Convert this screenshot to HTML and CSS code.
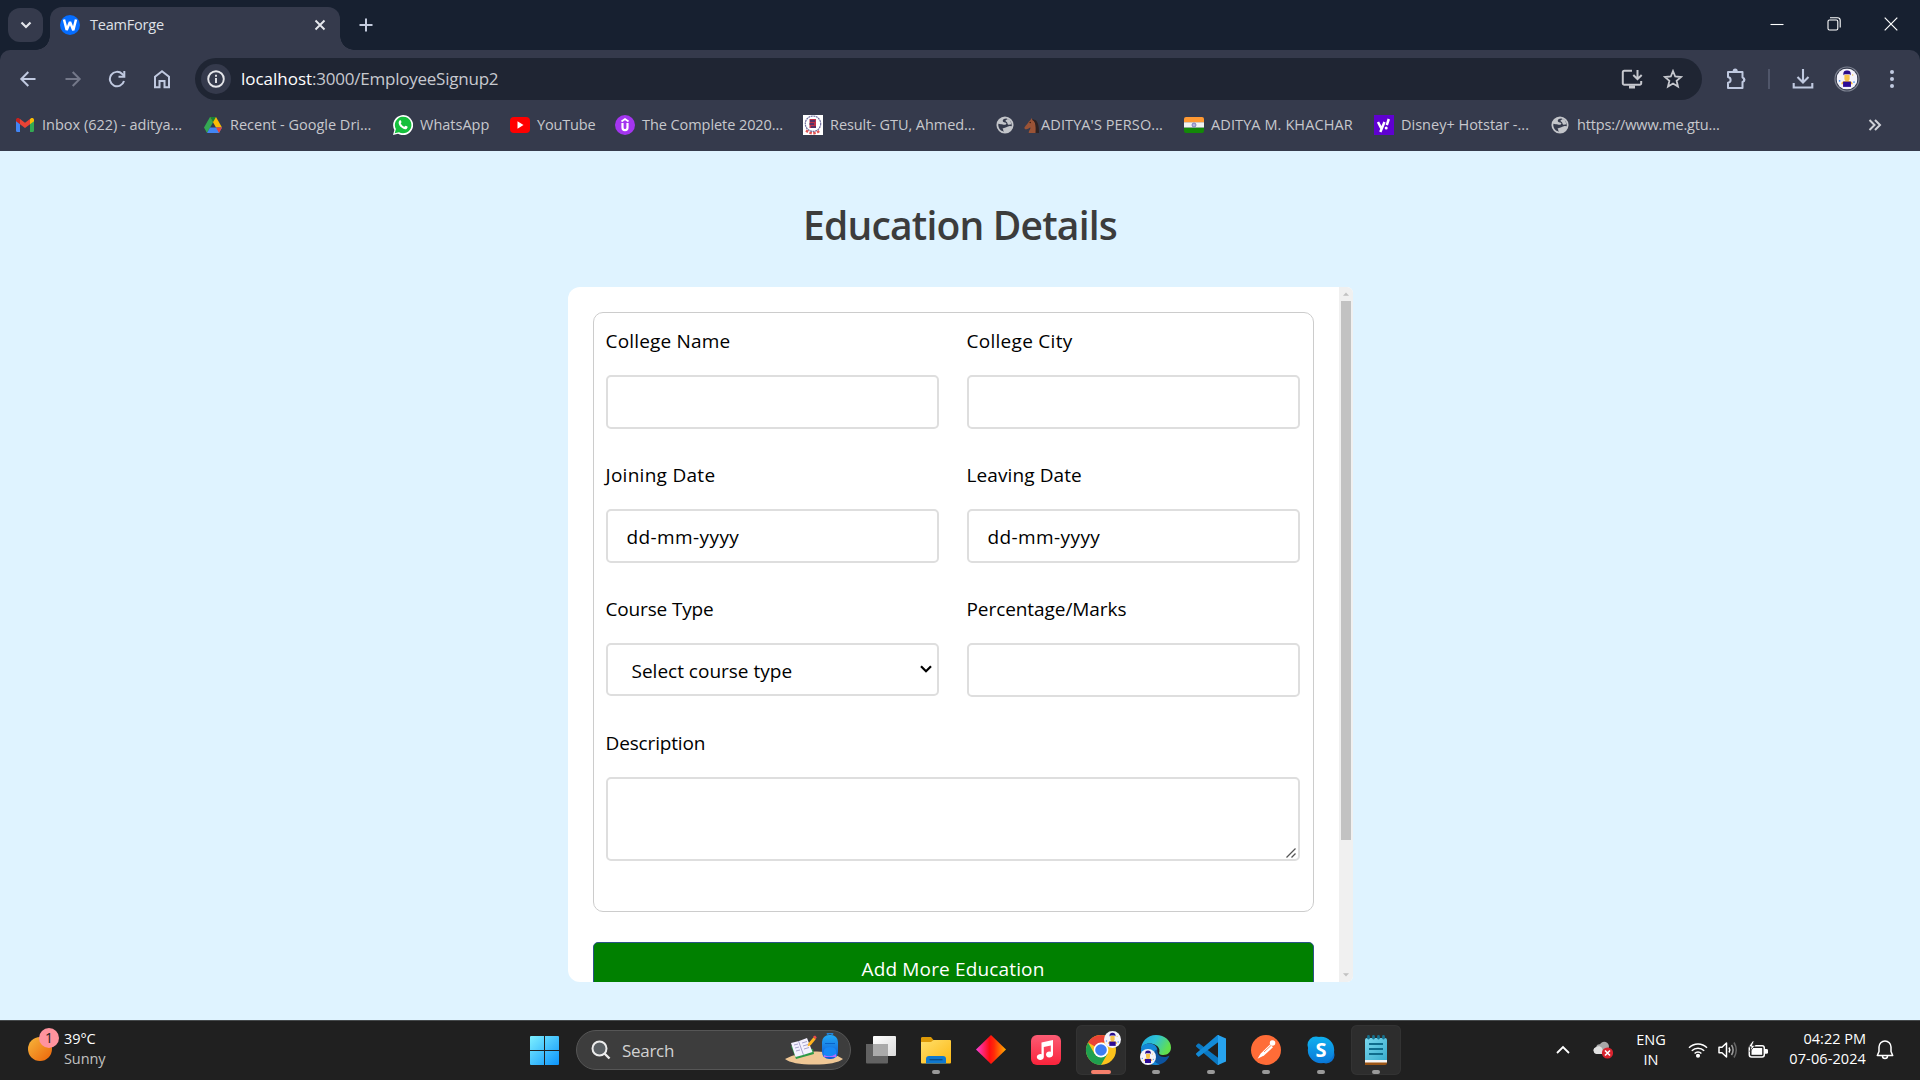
FILE: index.html
```html
<!DOCTYPE html>
<html lang="en">
<head>
<meta charset="utf-8">
<title>TeamForge</title>
<link rel="stylesheet" href="styles.css">
</head>
<body>
<svg class="defs" width="0" height="0" aria-hidden="true">
  <defs>
    <linearGradient id="sun" x1="0" y1="0" x2="1" y2="1"><stop offset="0" stop-color="#f6b73c"/><stop offset="1" stop-color="#ec6309"/></linearGradient>
    <linearGradient id="win" x1="0" y1="0" x2="1" y2="1"><stop offset="0" stop-color="#7df0ff"/><stop offset="1" stop-color="#0c94fb"/></linearGradient>
    <linearGradient id="folder" x1="0" y1="0" x2="1" y2="1"><stop offset="0" stop-color="#ffdf6b"/><stop offset="1" stop-color="#fdb813"/></linearGradient>
    <linearGradient id="diamond" x1="0" y1="0" x2="1" y2="0"><stop offset="0" stop-color="#fb3fd8"/><stop offset=".45" stop-color="#ff0d12"/><stop offset=".6" stop-color="#ff2a08"/><stop offset="1" stop-color="#ffb000"/></linearGradient>
    <linearGradient id="music" x1="0" y1="0" x2="0" y2="1"><stop offset="0" stop-color="#fb5c74"/><stop offset="1" stop-color="#fa233b"/></linearGradient>
    <linearGradient id="edgeTop" x1="0" y1="0" x2="1" y2=".4"><stop offset="0" stop-color="#1ba6e0"/><stop offset=".5" stop-color="#2fc3d5"/><stop offset="1" stop-color="#62e04c"/></linearGradient>
    <linearGradient id="skype" x1="0" y1="0" x2="0" y2="1"><stop offset="0" stop-color="#0fb0ef"/><stop offset="1" stop-color="#0a78d8"/></linearGradient>
    <linearGradient id="note" x1="0" y1="0" x2="1" y2="1"><stop offset="0" stop-color="#7ad8ee"/><stop offset="1" stop-color="#38acce"/></linearGradient>
    <linearGradient id="bag" x1="0" y1="0" x2="0" y2="1"><stop offset="0" stop-color="#22a8f5"/><stop offset="1" stop-color="#0f56d6"/></linearGradient>
    <linearGradient id="pane" x1="0" y1="0" x2="1" y2="1"><stop offset="0" stop-color="#ffffff"/><stop offset="1" stop-color="#dadada"/></linearGradient>
    <symbol id="person" viewBox="0 0 24 24">
      <circle cx="12" cy="12" r="12" fill="#f3f3fb"/>
      <path d="M9 7h6v4.500a3 3 0 0 1-6 0z" fill="#f6c24a"/>
      <path d="M8 7.800C7.300 4 9 2.400 12 2.400s4.900 1.500 4.100 5.400L15 6.500H9.300z" fill="#2a0c8c"/>
      <path d="M5.500 18c0-3 3-4 6.500-4s6.500 1 6.500 4z" fill="#f4b740"/>
      <rect x="7.500" y="15" width="9" height="6" fill="#2d0b96"/>
      <circle cx="3.500" cy="14" r="1" fill="#4d93f2"/><circle cx="20" cy="15.500" r="1" fill="#4d93f2"/><circle cx="18.500" cy="7.500" r=".8" fill="#f6c24a"/>
    </symbol>
    <symbol id="globe" viewBox="0 0 20 20">
      <circle cx="10" cy="10" r="9.500" fill="#c3c5ca"/>
      <path d="M11.500 2.700C8.500 3 7.500 4 7.500 5.500S10 7 11 7.500s.5 2-1 2.200c-2 .2-3-.7-4.600-.6L2.600 8.600C2.200 11 3 14 5.500 16l3.500 1.500c-1.500-1.500-.5-2.500-1.800-3.700l4.300-1.300c1.700-.5 2.500-1.500 4-1.300l2 .3c.5-4-2-8-6-8.800z" fill="#353a4c"/>
      <path d="M10.500 5.500c0-1.300 2-1 2.600-2.400l2.500 1.700 1.600 4.400-3 .6c-1.700-.5-1.200-2-2-2.900z" fill="#c3c5ca"/>
    </symbol>
  </defs>
</svg>

<div class="screen">
  <header class="tabstrip">
    <button class="tab-search" aria-label="Search tabs"><svg width="12" height="8" viewBox="0 0 12 8"><path d="M1.500 1.500 6 6l4.500-4.500" fill="none" stroke="#e3e5ea" stroke-width="2.200"/></svg></button>
    <div class="tab">
      <svg width="20" height="20" viewBox="0 0 20 20"><circle cx="10" cy="10" r="10" fill="#056dff"/><path d="M4 4.500 6.700 15 10 7l3.300 8.200L16 4.500" fill="none" stroke="#fff" stroke-width="2.500" stroke-linejoin="bevel"/></svg>
      <span class="tab-title">TeamForge</span>
      <svg width="12" height="12" viewBox="0 0 12 12"><path d="m1.500 1.500 9 9m0-9-9 9" stroke="#e6e8ee" stroke-width="1.900"/></svg>
    </div>
    <svg class="new-tab" width="14" height="14" viewBox="0 0 14 14"><path d="M7 .5v13M.5 7h13" stroke="#c4cbdd" stroke-width="2"/></svg>
    <div class="window-buttons">
      <svg width="14" height="14" viewBox="0 0 14 14"><path d="M.5 7.500h13" stroke="#fff" stroke-width="1.100"/></svg>
      <svg width="14" height="14" viewBox="0 0 14 14" fill="none" stroke="#fff" stroke-width="1.100"><rect x="1" y="3" width="9.800" height="10" rx="1.500"/><path d="M3 .8h7.500a2.700 2.700 0 0 1 2.700 2.700v7"/></svg>
      <svg width="14" height="14" viewBox="0 0 14 14"><path d="m.7.700 12.600 12.600m0-12.600L.7 13.300" stroke="#fff" stroke-width="1.200"/></svg>
    </div>
  </header>

  <div class="toolbar">
    <nav class="nav-buttons">
      <svg width="18" height="18" viewBox="0 0 18 18" fill="none" stroke="#c0c9e0" stroke-width="2"><path d="M16.500 9H3M9.300 2 2.300 9l7 7"/></svg>
      <svg width="18" height="18" viewBox="0 0 18 18" fill="none" stroke="#747889" stroke-width="2"><path d="M1.500 9H15M8.700 2l7 7-7 7"/></svg>
      <svg width="18" height="18" viewBox="0 0 18 18" fill="none" stroke="#c0c9e0" stroke-width="2"><path d="M16 11a7.200 7.200 0 1 1-1.800-7L16 5.800"/><path d="M16.300 1v5.800h-5.800"/></svg>
      <svg width="18" height="20" viewBox="0 0 18 20" fill="none" stroke="#c0c9e0" stroke-width="2"><path d="M2 7.800 9 2.300l7 5.500v10.500h-4.500V12h-5v6.300H2z"/></svg>
    </nav>
    <div class="omnibox">
      <span class="site-info"><svg width="18" height="18" viewBox="0 0 18 18"><circle cx="9" cy="9" r="7.800" fill="none" stroke="#e5e6ea" stroke-width="1.900"/><path d="M9 8v5M9 4.800v1.900" stroke="#e5e6ea" stroke-width="1.900"/></svg></span>
      <span class="url"><b>localhost</b>:3000/EmployeeSignup2</span>
      <svg class="install" width="22" height="20" viewBox="0 0 22 20" fill="none" stroke="#c6c8ce" stroke-width="2"><path d="M11 1.800H3.300A1.500 1.500 0 0 0 1.800 3.300v10.900a1.500 1.500 0 0 0 1.500 1.500h15.400a1.500 1.500 0 0 0 1.500-1.500V12M16.500 1v9M12.300 6l4.200 4.200L20.700 6"/><path d="M8 18h6" stroke-width="3"/></svg>
      <svg width="20" height="20" viewBox="0 0 20 20"><path d="m10 2 2.200 5.500 5.900.5-4.500 3.800 1.400 5.800-5-3.100-5 3.100 1.400-5.800L1.900 8l5.900-.5z" fill="none" stroke="#c6c8ce" stroke-width="1.800"/></svg>
    </div>
    <div class="toolbar-actions">
      <svg width="22" height="22" viewBox="0 0 22 22"><path d="M3 4h14.500v5.500a2.300 2.300 0 0 1 0 4.400V20H3v-5.200c3.500-.6 3.500-5 0-5.700z" fill="none" stroke="#c0c9e0" stroke-width="2" stroke-linejoin="round"/><path d="M7.700 3a2.500 2.500 0 0 1 5 0zM18 9.200a2.500 2.500 0 0 1 0 5z" fill="#c0c9e0"/></svg>
      <span class="divider"></span>
      <svg width="22" height="22" viewBox="0 0 22 22" fill="none" stroke="#c0c9e0" stroke-width="2.100"><path d="M11 1v13M5.500 9 11 14.500 16.500 9M1.700 15v4.500h18.600V15"/></svg>
      <svg class="a-user" width="26" height="26" viewBox="0 0 26 26"><circle cx="13" cy="13" r="12" fill="none" stroke="#7d8291" stroke-width="1.200"/><use href="#person" x="2.500" y="2.500" width="21" height="21"/></svg>
      <svg width="4" height="20" viewBox="0 0 4 20" fill="#c0c9e0"><circle cx="2" cy="3" r="2"/><circle cx="2" cy="10" r="2"/><circle cx="2" cy="17" r="2"/></svg>
    </div>
  </div>

  <div class="bookmarks">
    <a class="bm"><svg width="18" height="14" viewBox="0 0 18 14"><path d="M0 2v10.500c0 .8.500 1.500 1.300 1.500H4V5z" fill="#4285f4"/><path d="M18 2v10.500c0 .8-.5 1.500-1.300 1.500H14V5z" fill="#34a853"/><path d="M14 1v5.300l4-3V1.800C18 .2 16-.5 14.800.4z" fill="#fbbc04"/><path d="M0 3.300V1.800C0 .2 2-.5 3.200.4L4 1v5.300z" fill="#c5221f"/><path d="M4 6.300V1l5 3.700L14 1v5.300l-5 3.800z" fill="#ea4335"/></svg><span>Inbox (622) - aditya...</span></a>
    <a class="bm"><svg width="18" height="16" viewBox="0 0 18 16"><path d="M6 0 0 10.500 3 16l6-10.500z" fill="#34a853"/><path d="M6 0h6l6 10.500h-6z" fill="#fbbc04"/><path d="M6 0h6L9 5.300z" fill="#188038"/><path d="M6 10.500h12L15 16H3z" fill="#4285f4"/><path d="M12 10.500h6L15 16z" fill="#ea4335"/></svg><span>Recent - Google Dri...</span></a>
    <a class="bm g7"><svg width="20" height="20" viewBox="0 0 20 20"><path d="M0 20 1.400 15A10 10 0 1 1 5 18.700z" fill="#fff"/><path d="m1.700 18.300 1.200-4.200A8.300 8.300 0 1 1 6 17.200z" fill="#15c03c"/><path d="M6.700 5.300c.5-.3 1-.2 1.200.3l.6 1.500c.1.400-.6 1-.7 1.300.8 1.500 1.900 2.600 3.500 3.300.5-.2.900-1.200 1.400-1l1.700.9c.5.3-.1 2-.8 2.300-1.800.9-4-.2-5.700-1.800C6.300 10.600 4.500 7.700 6.700 5.300z" fill="#fff"/></svg><span>WhatsApp</span></a>
    <a class="bm g7"><svg width="20" height="16" viewBox="0 0 20 16"><rect width="20" height="16" rx="4" fill="#f00"/><path d="m7.500 4.300 6 3.700-6 3.700z" fill="#fff"/></svg><span class="n2">YouTube</span></a>
    <a class="bm g7"><svg width="20" height="20" viewBox="0 0 20 20"><circle cx="10" cy="10" r="10" fill="#a435f0"/><path d="M6.500 6.500 10 4l3.500 2.500" fill="none" stroke="#fff" stroke-width="1.800"/><path d="M7.500 8v4.500a2.500 2.700 0 0 0 5 0V8" fill="none" stroke="#fff" stroke-width="2.200"/></svg><span class="n1">The Complete 2020...</span></a>
    <a class="bm g7"><svg width="20" height="20" viewBox="0 0 20 20"><path d="M0 0h20v20H0z" fill="#fff"/><circle cx="10" cy="8.700" r="7.700" fill="#fff" stroke="#6c6b9d" stroke-width="1.200" stroke-dasharray="2 .6"/><path d="M6.500 4h6.500v9H6.500z" fill="#bd3049"/><path d="M7 6h5M6.500 9H11M8 12h5" stroke="#343270" stroke-width="1.500"/><path d="m3 15.500 3 2 4 1 4-1 3-2" fill="none" stroke="#df5252" stroke-width="2.500" stroke-dasharray="2.500 1.500"/></svg><span class="n1">Result- GTU, Ahmed...</span></a>
    <a class="bm b-horse"><svg width="18" height="18"><use href="#globe"/></svg><svg width="15" height="15" viewBox="0 0 16 16"><path d="M8 2c3-1.800 8 2 7 14H9l-1-5z" fill="#2e2222"/><path d="M7 2 8 0l1 2c3 1.500 3.500 5 3.500 8v6H5c0-3 2-4 2-6-1.500.3-2 1.500-3.500 1.800-1 .6-2.600.2-3-1C0 9.500 4 6.500 5 4z" fill="#9a5336"/><path d="M9 2c4 2 4 8 3.500 14H16C16 6 14 1 9 2z" fill="#2e2222"/><circle cx="6.600" cy="4.800" r=".7" fill="#2e1512"/></svg><span class="p1">ADITYA'S PERSO...</span></a>
    <a class="bm g7"><svg width="20" height="16" viewBox="0 0 20 16"><path d="M0 2a2 2 0 0 1 2-2h16a2 2 0 0 1 2 2v3.500H0z" fill="#ff9933"/><path d="M0 5.300h20v5.400H0z" fill="#f2f2f2"/><path d="M0 10.700h20V14a2 2 0 0 1-2 2H2a2 2 0 0 1-2-2z" fill="#138808"/><circle cx="10" cy="8" r="2" fill="#b5b5dc" stroke="#6d6db8" stroke-width=".8"/></svg><span class="p1">ADITYA M. KHACHAR</span></a>
    <a class="bm g7"><svg width="20" height="20" viewBox="0 0 20 20"><path d="M0 0h20v20H0z" fill="#5f01d1"/><path d="m4 7 3.200 6.300M10.500 7l-4.200 10M14.800 4l-2 6.200" stroke="#fff" stroke-width="2.500" fill="none"/><circle cx="12.200" cy="13" r="1.500" fill="#fff"/></svg><span>Disney+ Hotstar -...</span></a>
    <a class="bm"><svg width="18" height="18"><use href="#globe"/></svg><span class="n2">https://www.me.gtu...</span></a>
    <a class="bm"><svg width="14" height="12" viewBox="0 0 14 12"><path d="m1.500 1 5 5-5 5M7 1l5 5-5 5" fill="none" stroke="#cfd1d8" stroke-width="2"/></svg></a>
  </div>

  <main class="page">
    <h1>Education Details</h1>
    <div class="card">
      <form class="form">
        <section class="education">
          <div class="field"><label class="p2">College Name</label><input type="text"></div>
          <div class="field"><label class="p3">College City</label><input type="text"></div>
          <div class="field"><label class="p3">Joining Date</label><input type="text" value="dd-mm-yyyy"></div>
          <div class="field"><label class="p1">Leaving Date</label><input type="text" value="dd-mm-yyyy"></div>
          <div class="field"><label class="n2">Course Type</label>
            <div class="select"><span>Select course type</span><svg width="12" height="8" viewBox="0 0 12 8"><path d="m1 1.300 5 5 5-5" fill="none" stroke="#000" stroke-width="2.200"/></svg></div>
          </div>
          <div class="field"><label class="n1">Percentage/Marks</label><input type="text"></div>
          <div class="field wide"><label class="n2">Description</label>
            <div class="textarea"><svg width="10" height="10" viewBox="0 0 10 10"><path d="M.5 9.500l9-9M5.500 9.500l4-4" stroke="#555" stroke-width="1.300"/></svg></div>
          </div>
        </section>
        <button type="button" class="add">Add More Education</button>
      </form>
      <div class="scrollbar">
        <svg width="14" height="14" viewBox="0 0 14 14"><path d="m7 5.500 3 3.200H4z" fill="#c1c1c1"/></svg>
        <div class="thumb"></div>
        <svg width="14" height="14" viewBox="0 0 14 14"><path d="M7 8.500 4 5.300h6z" fill="#c1c1c1"/></svg>
      </div>
    </div>
  </main>

  <footer class="taskbar">
    <div class="weather">
      <svg width="32" height="36" viewBox="0 0 32 36"><circle cx="12" cy="21" r="12" fill="url(#sun)"/><circle cx="21" cy="10" r="10" fill="#ff939e"/><text x="21" y="15" text-anchor="middle" class="badge">1</text></svg>
      <div class="temps"><span>39°C</span><span class="muted">Sunny</span></div>
    </div>
    <svg class="start" width="29" height="29" viewBox="0 0 29 29"><path d="M0 1a1 1 0 0 1 1-1h13v14H0zM15 0h13a1 1 0 0 1 1 1v13H15zM0 15h14v14H1a1 1 0 0 1-1-1zM15 15h14v13a1 1 0 0 1-1 1H15z" fill="url(#win)"/></svg>
    <div class="search">
      <svg width="20" height="20" viewBox="0 0 20 20" fill="none" stroke="#ececec"><circle cx="8.500" cy="8.500" r="7" stroke-width="2" fill="#5a5f63"/><path d="m13.500 13.500 5 5" stroke-width="2.400"/></svg>
      <span>Search</span>
      <svg width="58" height="34" viewBox="0 0 58 34"><path d="M0 26q16-8 32-7.500 14 0 26 7.500-7 5.500-29 5.500T0 26z" fill="#efc795"/><path d="m6 13 5 13 18-5-1-5z" fill="#2f9a49"/><path d="m6 10 4.500 14L18 22l9.500-3L22 5l-8 3z" fill="#f4f1ff"/><path d="m13.500 8 5 14M9 12l4-1m-3 4 4-1m-3 4 4-1m2-7 5-1.500m-4 4.500 5-1.500m-4 4.500 5-1.500" stroke="#a8a4cc" fill="none"/><path d="m22.500 13.500 1-3.300 5-6 2.200 2-5 6z" fill="#ffb31f"/><path d="m28 3.800 2-1.300 1.700 1.700-1 2z" fill="#ef4a4a"/><path d="M42 1.500q3-2.500 6 0" stroke="#2386da" stroke-width="2" fill="none"/><rect x="37" y="2" width="16" height="24" rx="7" fill="url(#bag)"/><path d="M38.500 20q0-6 6.500-6t6.500 6v4h-13z" fill="#1688f5"/><path d="M39 22q6 3 12-1v3H39z" fill="#b268ff"/><path d="M40 10.500h10" stroke="#0a63c8"/></svg>
    </div>
    <div class="apps">
      <div class="app"><svg width="32" height="32" viewBox="0 0 32 32"><path d="M1 10h22v18.500a1 1 0 0 1-1 1H2a1 1 0 0 1-1-1z" fill="#626262"/><rect x="8" y="2" width="23" height="20" rx="1" fill="url(#pane)"/><path d="M8 10h15v12H9a1 1 0 0 1-1-1z" fill="#aaa"/></svg></div>
      <div class="app dot"><svg width="32" height="32" viewBox="0 0 32 32"><path d="M1 4a1.500 1.500 0 0 1 1.500-1H11l2.500 3v4H1z" fill="#dd9a08"/><path d="M1 8h10l2.500-2H30a1 1 0 0 1 1 1v21.500a1 1 0 0 1-1 1H2a1 1 0 0 1-1-1z" fill="url(#folder)"/><path d="M6 29.500V25a3 3 0 0 1 3-3h14a3 3 0 0 1 3 3v4.500z" fill="#0f78cf"/><path d="M9.500 25.700h13" stroke="#0a4c86" stroke-width="1.300"/></svg></div>
      <div class="app"><svg width="32" height="32" viewBox="0 0 32 32"><path d="m16 1 15 14.500L16 30 1 15.500z" fill="url(#diamond)"/></svg></div>
      <div class="app"><svg width="32" height="32" viewBox="0 0 32 32"><rect x="1" y="1" width="30" height="30" rx="6" fill="url(#music)"/><path d="M11.500 8.500 23 6v14.500a3.500 3 0 1 1-2.200-2.800V11.500l-7 1.500v10a3.500 3 0 1 1-2.300-2.800z" fill="#fff"/></svg></div>
      <div class="app open active">
        <svg width="32" height="32" viewBox="0 0 32 32"><circle cx="16" cy="16" r="15" fill="#fcc31c"/><path d="M16 16 3 8.500A15 15 0 0 1 29 8.500H16z" fill="#ea4335"/><path d="M3 8.500A15 15 0 0 0 16 31l6.500-11.200L9.500 19.800z" fill="#1fa04f"/><circle cx="16" cy="16" r="7.400" fill="#fff"/><circle cx="16" cy="16" r="5.800" fill="#3d7df2"/></svg>
        <svg class="profile top" width="17" height="17"><use href="#person"/></svg>
      </div>
      <div class="app dot">
        <svg width="32" height="32" viewBox="0 0 32 32"><path d="M1 16C1 8 7 1 16 1c9 0 15 6 15 12.500 0 4.800-3.500 7.500-7.500 7.500-4 0-5-1.500-4-3.500C20 12 14 9.500 9.500 9.500 5 9.500 2 12 1 16z" fill="url(#edgeTop)"/><path d="M12.500 20c0-3 1.500-5 5-5.500-1 5 2 8.500 6.500 8.500 2.500 0 4-.7 5.500-1.500C27 27.500 22 31 16 31z" fill="#0c54a0"/><path d="M1 16C1 11 6 9 10 9.500c4.500.5 7.500 3.500 7 6-3 1-4.500 3-4.500 6 0 5 5 9.300 8 8.600C10 34 1 25 1 16z" fill="#1487d8"/></svg>
        <svg class="profile bottom" width="16" height="16"><use href="#person"/></svg>
      </div>
      <div class="app dot"><svg width="32" height="32" viewBox="0 0 32 32"><path d="M1.300 11.200 3 9.600a1 1 0 0 1 1.200 0L24 24.500V31h-1.500L1.300 12.700a1 1 0 0 1 0-1.500z" fill="#0b78c2"/><path d="M1.300 20.800 3 22.400a1 1 0 0 0 1.200 0L24 7.500V1h-1.500L1.300 19.300a1 1 0 0 0 0 1.500z" fill="#138bd8"/><path d="M23 1 31 4.500v23L23 31z" fill="#27a3ef"/></svg></div>
      <div class="app dot"><svg width="32" height="32" viewBox="0 0 32 32"><circle cx="16" cy="16" r="15" fill="#ff6c37"/><circle cx="22.500" cy="9" r="2.800" fill="#fff"/><path d="m20 10.500 3 2.800-9 8.200-6.500 3.300 3-5z" fill="#fff"/><path d="m14 18 7-6.500" stroke="#ff6c37" stroke-width=".8"/></svg></div>
      <div class="app dot"><svg width="32" height="32" viewBox="0 0 32 32"><circle cx="11" cy="11" r="8.500" fill="#0faaea"/><circle cx="21" cy="21" r="8.500" fill="#0a74d3"/><circle cx="16" cy="16" r="13.200" fill="url(#skype)"/><text x="16" y="23" text-anchor="middle" class="skype-s">S</text></svg></div>
      <div class="app dot open"><svg width="32" height="32" viewBox="0 0 32 32"><path d="M5 25h22v4a2 2 0 0 1-2 2H5z" fill="#9b5515"/><path d="M5 24h22v4.500H5z" fill="#f5f5f5"/><path d="M5 6a2 2 0 0 1 2-2h18a2 2 0 0 1 2 2v20H5z" fill="url(#note)"/><path d="M9 10h14M9 15h14M9 20h14" stroke="#0f6c8d" stroke-width="1.800"/><path d="M8.500 2.500v1.500M13.500 2.500v1.500M18.500 2.500v1.500M23.500 2.500v1.500" stroke="#17718e" stroke-width="2.800" stroke-linecap="round"/></svg></div>
    </div>
    <div class="tray">
      <svg class="t-up" width="14" height="10" viewBox="0 0 14 10"><path d="m1 8 6-6 6 6" fill="none" stroke="#fff" stroke-width="1.800"/></svg>
      <svg class="t-cloud" width="20" height="18" viewBox="0 0 20 18"><path d="M3.500 13A3.500 3.500 0 0 1 3 6.200C4 3 6 3 7 3.300 9-.5 15 0 16 5l-1 6z" fill="#a7a7a7"/><path d="M3.500 13A3.500 3.500 0 0 1 3 6.200C5 4.500 7.500 5 9 7l2 6z" fill="#e0e0e0"/><circle cx="14.500" cy="12" r="5.600" fill="#d9232e"/><path d="m12 9.500 5 5m0-5-5 5" stroke="#fff" stroke-width="1.600"/></svg>
      <div class="lang"><span>ENG</span><span>IN</span></div>
      <svg class="t-wifi" width="20" height="16" viewBox="0 0 20 16" fill="none" stroke="#fff" stroke-width="1.500"><path d="M1 5.700a12.700 12.700 0 0 1 18 0M3.800 8.700a8.800 8.800 0 0 1 12.400 0M6.600 11.500a4.800 4.800 0 0 1 6.800 0"/><circle cx="10" cy="13.700" r="1.300" fill="#fff"/></svg>
      <svg class="t-vol" width="20" height="18" viewBox="0 0 20 18" fill="none" stroke="#fff" stroke-width="1.500"><path d="M1 6.200h3L8.500 2v14L4 11.800H1z" stroke-linejoin="round"/><path d="M11 6.500q1.600 2.500 0 5"/><path d="M13.500 4q3.200 5 0 10" stroke="#a0a0a0"/><path d="M16 1.500q4.500 7.500 0 15" stroke="#666"/></svg>
      <svg class="t-bat" width="20" height="18" viewBox="0 0 20 18"><rect x="1.300" y="4.800" width="15" height="11.200" rx="2.200" fill="#202020" stroke="#fff" stroke-width="1.500"/><rect x="3.500" y="7" width="10.700" height="6.800" fill="#fff"/><path d="M17 8h1.500q1.500 0 1.500 1.300v2.200q0 1.300-1.500 1.300H17z" fill="#fff"/><path d="M4.500 0 .5 5.800h2.700L2 10.500l5-6H4.300L6.300 0z" fill="#fff" stroke="#202020" stroke-width=".8"/></svg>
      <div class="clock"><span>04:22 PM</span><span class="p1">07-06-2024</span></div>
      <svg width="18" height="20" viewBox="0 0 18 20" fill="none" stroke="#fff" stroke-width="1.500"><path d="M1.300 15.500 3 11.500V7a6 6 0 0 1 12 0v4.500l1.700 4z" stroke-linejoin="round"/><path d="M6.500 16a2.500 2.500 0 0 0 5 0"/></svg>
    </div>
  </footer>
</div>
</body>
</html>
```
FILE: styles.css
```css
* { box-sizing: border-box; }
body { margin: 0; font-family: "Open Sans", "Noto Sans", sans-serif; }
svg { display: block; flex: none; }
.defs { position: absolute; }
.screen { width: 1920px; height: 1080px; display: flex; flex-direction: column; overflow: hidden; background: #172030; }

/* letter spacing steps: n = tighter, p = looser */
.n2 { letter-spacing: -0.15px; }
.n1 { letter-spacing: -0.07px; }
.p1 { letter-spacing: 0.1px; }
.p2 { letter-spacing: 0.19px; }
.p3 { letter-spacing: 0.28px; }

/* tab strip */
.tabstrip { height: 50px; display: flex; align-items: flex-start; background: #172030; padding-left: 8px; }
.tab-search { width: 35px; height: 34px; margin-top: 8px; padding: 0; border: 0; border-radius: 12px; background: #353a4c; display: grid; place-items: center; }
.tab { position: relative; width: 290px; height: 43px; margin: 7px 0 0 7px; padding: 0 14px 7px 10px; border-radius: 12px 12px 0 0; background: #353a4c; display: flex; align-items: center; }
.tab::before, .tab::after { content: ""; position: absolute; bottom: 0; width: 14px; height: 14px; }
.tab::before { left: -14px; background: radial-gradient(circle at 0 0, transparent 13.500px, #353a4c 14px); }
.tab::after { right: -14px; background: radial-gradient(circle at 100% 0, transparent 13.500px, #353a4c 14px); }
.tab-title { flex: 1; margin-left: 10px; color: #dfe1e7; font-size: 14.500px; letter-spacing: -0.2px; line-height: 20px; }
.new-tab { margin: 18px 0 0 19px; }
.window-buttons { margin: 17px 22px 0 auto; display: flex; gap: 43px; }

/* toolbar */
.toolbar { height: 50px; padding: 8px 23px 0 19px; border-radius: 10px 10px 0 0; background: #353a4c; display: flex; align-items: flex-start; }
.nav-buttons { width: 176px; height: 42px; display: flex; align-items: center; gap: 26.700px; }
.omnibox { width: 1507px; height: 42px; padding: 0 19px 0 6px; border-radius: 21px; background: #1f2533; display: flex; align-items: center; }
.site-info { width: 30px; height: 30px; border-radius: 50%; background: #353a4c; display: grid; place-items: center; }
.url { flex: 1; margin-left: 10px; color: #c7c9cf; font-size: 17px; line-height: 42px; letter-spacing: -0.23px; }
.url b { color: #fff; font-weight: 400; letter-spacing: -0.02px; }
.install { margin-right: 20px; }
.toolbar-actions { flex: 1; height: 42px; margin-left: 23px; display: flex; align-items: center; }
.divider { width: 2px; height: 20px; margin: 0 22px 0 21px; background: #50566a; }
.a-user { margin: 0 30px 0 20px; }

/* bookmarks */
.bookmarks { height: 51px; padding: 0 0 1px 16px; background: #353a4c; display: grid; grid-template-columns: 188px 189px 117px 105px 188px 193px 188px 190px 177px 317px 40px; align-items: center; }
.bm { display: flex; align-items: center; gap: 8px; color: #c7c8cd; font-size: 14.500px; line-height: 20px; white-space: nowrap; }
.bm.g7 { gap: 7px; }
.bm.b-horse { gap: 10px; }
.b-horse span { margin-left: -8px; }

/* page */
.page { height: 869px; padding-top: 50px; background: #dff3ff; display: flex; flex-direction: column; align-items: center; }
h1 { margin: 0 0 38px; color: #3c3c3c; font-size: 39px; font-weight: 600; line-height: 48px; letter-spacing: -0.81px; }
.card { width: 785px; height: 695px; border-radius: 12px 6px 6px 12px; background: #fff; display: flex; overflow: hidden; }
.form { width: 771px; padding: 25px; }
.education { height: 600px; padding: 13px 13px 0 12px; border: 1px solid #ccc; border-radius: 10px; display: grid; grid-template-columns: 333px 333px; gap: 30px 28px; align-content: start; }
.field { height: 104px; }
.field.wide { grid-column: span 2; height: 134px; }
label { display: block; margin-bottom: 19px; color: #000; font-size: 19px; line-height: 30px; }
input, .select, .textarea { width: 100%; height: 54px; border: 2px solid #dedede; border-radius: 5px; background: #fff; color: #000; font: 19px "Open Sans", "Noto Sans", sans-serif; }
input { display: block; padding: 1px 19px 0; letter-spacing: 0.4px; outline: 0; }
.select { height: 53px; padding: 0 5px 0 24px; display: flex; align-items: center; justify-content: space-between; }
.select span { margin-top: 2px; }
.select svg { margin-bottom: 1px; }
.textarea { height: 84px; padding: 2px; display: flex; align-items: flex-end; justify-content: flex-end; }
.textarea svg { margin-bottom: -1px; }
.add { width: 721px; height: 65px; margin-top: 30px; padding: 11px 0; border: 1px solid #2b5487; border-radius: 5px; background: #008000; color: #fff; font: 19px/30px "Open Sans", "Noto Sans", sans-serif; letter-spacing: 0.15px; display: flex; justify-content: center; }
.scrollbar { width: 14px; background: #f0f0f0; display: flex; flex-direction: column; align-items: center; }
.thumb { width: 10px; height: 539px; margin-bottom: auto; background: #c2c2c2; }

/* taskbar */
.taskbar { height: 60px; border-top: 1px solid #45494b; background: #202020; color: #fff; display: flex; align-items: flex-start; font-size: 14.500px; }
.weather { width: 502px; padding: 7px 0 0 28px; display: flex; gap: 4px; }
.weather svg { margin-top: 0; }
.badge { font: 14px "Open Sans", sans-serif; fill: #1d1d1d; }
.temps, .lang, .clock { display: flex; flex-direction: column; line-height: 20px; }
.temps { margin-top: 1px; letter-spacing: -0.1px; }
.muted { color: #c0c0c0; }
.start { margin: 15px 0 0 28px; }
.search { width: 275px; height: 40px; margin: 9px 0 0 17px; padding: 0 7px 0 14px; border: 1px solid #565656; border-radius: 20px; background: #3d3d3d; display: flex; align-items: center; }
.search span { flex: 1; margin-left: 11px; color: #d2d2d2; font-size: 17px; letter-spacing: -0.3px; }
.apps { margin: 4px 0 0 5px; display: flex; gap: 5px; }
.app { position: relative; width: 50px; height: 50px; border-radius: 6px; display: flex; justify-content: center; padding-top: 9px; }
.open { background: #2d2d2d; box-shadow: inset 0 0 0 1px #333; }
.dot::after, .active::after { content: ""; position: absolute; bottom: 1px; left: 21px; width: 8px; height: 4px; border-radius: 2px; background: #999; }
.active::after { left: 15px; width: 20px; background: #f5806c; }
.profile { position: absolute; }
.profile.top { top: 6px; left: 28px; }
.profile.bottom { top: 24px; left: 9px; }
.skype-s { font: 700 20px "Open Sans", sans-serif; fill: #fff; }
.tray { flex: 1; margin-top: 9px; height: 40px; padding-right: 26px; display: flex; align-items: center; justify-content: flex-end; }
.t-up { margin-right: 23px; }
.t-cloud { margin-right: 23px; }
.lang { width: 30px; margin-right: 22px; align-items: center; }
.t-wifi, .t-vol { margin-right: 10px; }
.clock { width: 79px; margin: -2px 10px 0 19px; align-items: flex-end; }
```
